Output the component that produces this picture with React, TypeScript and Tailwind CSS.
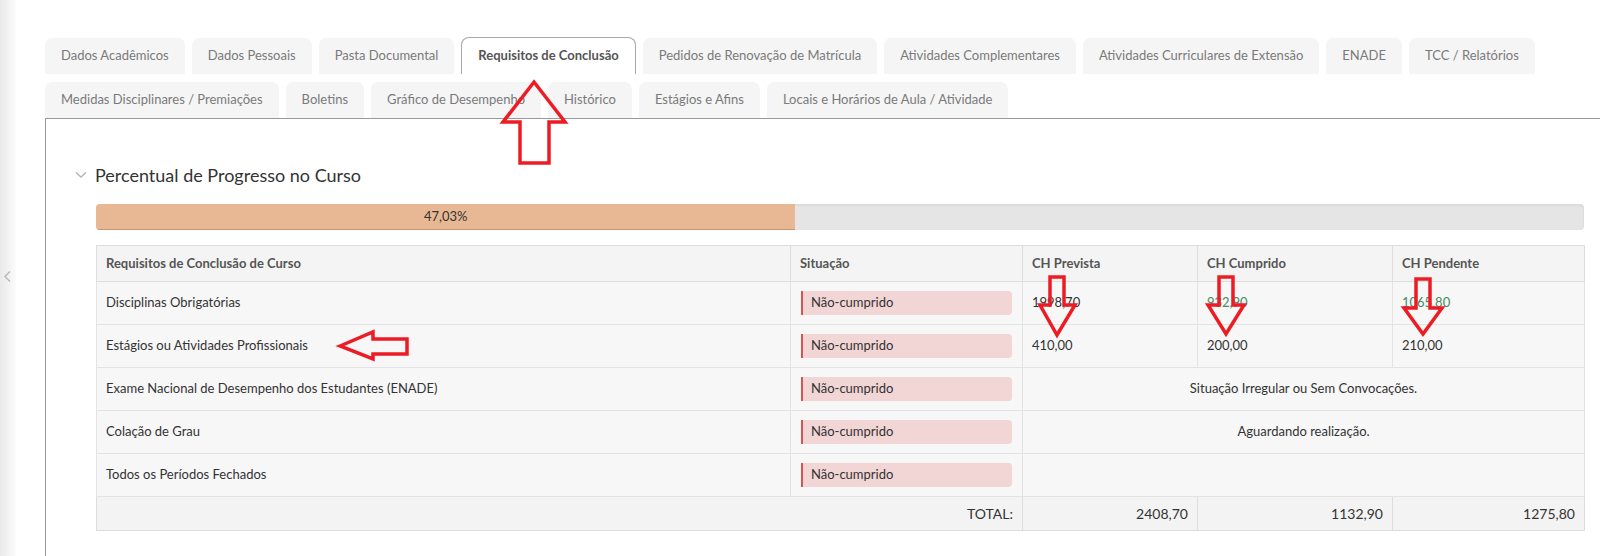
import React from 'react';

const rowTabs = [
    ['Dados Acadêmicos', 'Dados Pessoais', 'Pasta Documental', 'Requisitos de Conclusão', 'Pedidos de Renovação de Matrícula', 'Atividades Complementares', 'Atividades Curriculares de Extensão', 'ENADE', 'TCC / Relatórios'],
    ['Medidas Disciplinares / Premiações', 'Boletins', 'Gráfico de Desempenho', 'Histórico', 'Estágios e Afins', 'Locais e Horários de Aula / Atividade'],
];

const ACTIVE = 'Requisitos de Conclusão';

type Row = {
    name: string;
    prevista?: string;
    cumprido?: string;
    pendente?: string;
    green?: boolean;
    note?: string;
};

const rows: Row[] = [
    { name: 'Disciplinas Obrigatórias', prevista: '1998,70', cumprido: '932,90', pendente: '1065,80', green: true },
    { name: 'Estágios ou Atividades Profissionais', prevista: '410,00', cumprido: '200,00', pendente: '210,00' },
    { name: 'Exame Nacional de Desempenho dos Estudantes (ENADE)', note: 'Situação Irregular ou Sem Convocações.' },
    { name: 'Colação de Grau', note: 'Aguardando realização.' },
    { name: 'Todos os Períodos Fechados', note: '' },
];

const Badge: React.FC = () => (
    <div className="h-[24px] flex items-center bg-[#f2d5d5] border-l-2 border-[#d9534f] rounded-r-[4px] pl-[8px] text-[13px] text-[#333]">
        Não-cumprido
    </div>
);

const App: React.FC = () => {
    return (
        <div className="relative w-[1600px] h-[556px] overflow-hidden bg-white flex font-['Lato',sans-serif]">
            {/* sidebar edge */}
            <div className="w-[16px] shrink-0 bg-gradient-to-r from-[#e9e9e9] to-[#fcfcfc] flex flex-col items-start pt-[270px] pl-[3px]">
                <svg width="9" height="13" viewBox="0 0 9 13">
                    <path d="M7 1.5 L2 6.5 L7 11.5" fill="none" stroke="#bdbdbd" strokeWidth="1.7" />
                </svg>
            </div>

            <div className="flex-1 pl-[29px] pt-[38px] flex flex-col">
                {/* Tabs */}
                <div className="flex flex-col gap-[8px]">
                    {rowTabs.map((row, ri) => (
                        <div key={ri} className="flex gap-[7px] items-end">
                            {row.map((t) =>
                                t === ACTIVE ? (
                                    <div key={t} className="h-[37px] -mt-[1px] px-[16px] flex items-center bg-white border border-b-0 border-[#a8a8a8] rounded-t-[8px] text-[13px] font-bold text-[#555]">
                                        {t}
                                    </div>
                                ) : (
                                    <div key={t} className="h-[36px] px-[16px] flex items-center bg-[#f5f5f5] rounded-t-[7px] text-[13px] text-[#7a7a7a]">
                                        {t}
                                    </div>
                                )
                            )}
                        </div>
                    ))}
                </div>

                {/* Panel */}
                <div className="flex-1 border-l border-t border-[#9a9a9a] pl-[29px] pt-[45px]">
                    <div className="flex items-center gap-[8px] h-[22px]">
                        <svg width="12" height="8" viewBox="0 0 12 8">
                            <path d="M1 1.5 L6 6 L11 1.5" fill="none" stroke="#b5b5b5" strokeWidth="1.4" />
                        </svg>
                        <span className="text-[18px] leading-[22px] text-[#333]">Percentual de Progresso no Curso</span>
                    </div>

                    <div className="pl-[21px] w-[1509px]">
                        {/* progress */}
                        <div className="mt-[18px] h-[26px] rounded-[4px] bg-[#e5e5e5] shadow-[inset_0_1px_3px_rgba(0,0,0,0.08)] flex overflow-hidden">
                            <div className="w-[47%] bg-[#e8b894] border-b border-[#c9976f] flex items-center justify-center text-[13px] text-[#333]">
                                47,03%
                            </div>
                        </div>

                        {/* table */}
                        <table className="mt-[15px] w-[1488px] border-collapse table-fixed text-[13px] text-[#333]">
                            <colgroup>
                                <col className="w-[694px]" />
                                <col className="w-[232px]" />
                                <col className="w-[175px]" />
                                <col className="w-[195px]" />
                                <col className="w-[192px]" />
                            </colgroup>
                            <thead>
                                <tr className="h-[36px] bg-[#f4f4f4] text-left text-[#555] font-bold">
                                    <th className="border border-[#ddd] px-[9px]">Requisitos de Conclusão de Curso</th>
                                    <th className="border border-[#ddd] px-[9px]">Situação</th>
                                    <th className="border border-[#ddd] px-[9px]">CH Prevista</th>
                                    <th className="border border-[#ddd] px-[9px]">CH Cumprido</th>
                                    <th className="border border-[#ddd] px-[9px]">CH Pendente</th>
                                </tr>
                            </thead>
                            <tbody>
                                {rows.map((r) => (
                                    <tr key={r.name} className="h-[43px] bg-[#f7f7f7]">
                                        <td className="border border-[#e3e3e3] px-[9px]">{r.name}</td>
                                        <td className="border border-[#e3e3e3] px-[10px]">
                                            <Badge />
                                        </td>
                                        {r.note !== undefined ? (
                                            <td colSpan={3} className="border border-[#e3e3e3] px-[9px] text-center">
                                                {r.note}
                                            </td>
                                        ) : (
                                            <>
                                                <td className="border border-[#e3e3e3] px-[9px]">{r.prevista}</td>
                                                <td className={`border border-[#e3e3e3] px-[9px] ${r.green ? 'text-[#468a5f]' : ''}`}>{r.cumprido}</td>
                                                <td className={`border border-[#e3e3e3] px-[9px] ${r.green ? 'text-[#468a5f]' : ''}`}>{r.pendente}</td>
                                            </>
                                        )}
                                    </tr>
                                ))}
                                <tr className="h-[34px] bg-[#f3f3f3] text-right text-[14px]">
                                    <td colSpan={2} className="border border-[#ddd] px-[9px]">TOTAL:</td>
                                    <td className="border border-[#ddd] px-[9px]">2408,70</td>
                                    <td className="border border-[#ddd] px-[9px]">1132,90</td>
                                    <td className="border border-[#ddd] px-[9px]">1275,80</td>
                                </tr>
                            </tbody>
                        </table>
                    </div>
                </div>
            </div>

            {/* red annotation arrows drawn over the screenshot */}
            <svg className="absolute inset-0 pointer-events-none" width="1600" height="556">
                <g fill="none" stroke="#ed1c24" strokeWidth="3.5" strokeLinejoin="miter">
                    <polygon points="534,82 565,122 549,122 549,163 520,163 520,122 503,122" />
                    <polygon points="340,346 373,332 373,339 407,339 407,354 373,354 373,359" />
                    <polygon points="1050,277 1064,277 1064,305 1075,305 1057,335 1040,305 1050,305" />
                    <polygon points="1219,277 1233,277 1233,305 1244,305 1226,334 1208,305 1219,305" />
                    <polygon points="1416,279 1430,279 1430,308 1442,308 1423,334 1404,308 1416,308" />
                </g>
            </svg>
        </div>
    );
};

export default App;
